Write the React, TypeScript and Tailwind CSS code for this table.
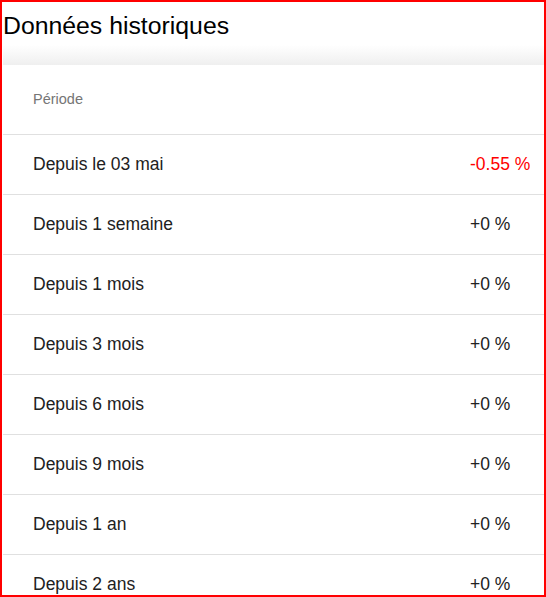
const rows = [
  { label: 'Depuis le 03 mai', value: '-0.55 %', down: true },
  { label: 'Depuis 1 semaine', value: '+0 %' },
  { label: 'Depuis 1 mois', value: '+0 %' },
  { label: 'Depuis 3 mois', value: '+0 %' },
  { label: 'Depuis 6 mois', value: '+0 %' },
  { label: 'Depuis 9 mois', value: '+0 %' },
  { label: 'Depuis 1 an', value: '+0 %' },
  { label: 'Depuis 2 ans', value: '+0 %' },
]

const App = () => {
  return (
    <div className="h-[597px] w-[546px] overflow-hidden border-2 border-[#ff0000] bg-white font-['Liberation_Sans',Arial,sans-serif]">
      <div className="h-[43px] pl-px pt-[9px] text-[24.8px] leading-[30px] text-black">Données historiques</div>
      <div className="ml-px h-5 bg-gradient-to-b from-white to-[#efefef]" />
      <div className="ml-px bg-white">
        <div className="flex h-[70px] items-center border-b border-[#e0e0e0] pl-[30px] pt-px text-[14.5px] text-[#757575]">
          Période
        </div>
        {rows.map((row) => (
          <div
            key={row.label}
            className="grid h-[60px] grid-cols-[1fr_74px] items-center border-b border-[#e0e0e0] pl-[30px] text-[17.5px] text-[#212121]"
          >
            <span>{row.label}</span>
            <span className={row.down ? 'text-[#ff0000]' : ''}>{row.value}</span>
          </div>
        ))}
      </div>
    </div>
  )
}

export default App
